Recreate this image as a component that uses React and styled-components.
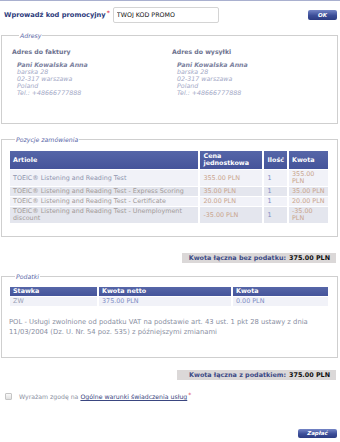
import React from "react";
import styled, { createGlobalStyle } from "styled-components";

const Global = createGlobalStyle`
  html, body { margin: 0; padding: 0; background: #fff; }
  body { font-family: "DejaVu Sans", Verdana, sans-serif; }
`;

const Page = styled.div`
  width: 340px;
  border-top: 1px solid #a9b0cf;
  box-sizing: border-box;
`;

const PromoRow = styled.div`
  display: flex;
  align-items: center;
  padding: 5px 3px 0 4px;
  height: 17px;
`;

const Label = styled.label`
  font-size: 6.7px;
  font-weight: bold;
  color: #2e3c7c;
`;

const Req = styled.sup`
  color: #e0405a;
  font-size: 6px;
  vertical-align: top;
  position: relative;
  top: -2px;
  margin-left: 1px;
`;

const Input = styled.input`
  width: 106px;
  height: 16px;
  box-sizing: border-box;
  margin-left: 3px;
  border: 1px solid #d4d4d4;
  border-radius: 2px;
  font-family: "DejaVu Sans", sans-serif;
  font-size: 6.3px;
  color: #111;
  padding: 0 3px;
  outline: none;
`;

const Spacer = styled.div`
  flex: 1;
`;

const Button = styled.button`
  width: ${(p) => p.$w}px;
  height: ${(p) => p.$h}px;
  border: none;
  border-radius: 2px;
  padding: 0;
  background: linear-gradient(#7485c6, #3c4e98 55%, #2c3c82);
  color: #fff;
  font-family: "DejaVu Sans", sans-serif;
  font-weight: bold;
  font-style: italic;
  font-size: 5.5px;
  line-height: ${(p) => p.$h}px;
  text-align: center;
`;

const Fieldset = styled.fieldset`
  margin: ${(p) => p.$mt}px 2px 0 1px;
  border: 1px solid #cfcfcf;
  padding: ${(p) => p.$pad};
  min-width: 0;
`;

const Legend = styled.legend`
  font-size: 6.2px;
  font-style: italic;
  color: #5b68a8;
  padding: 0 1px;
  margin-left: 7px;
  line-height: 7px;
`;

const AddrGrid = styled.div`
  display: grid;
  grid-template-columns: 160px 1fr;
`;

const AddrTitle = styled.div`
  font-size: 6.2px;
  font-weight: bold;
  color: #6c718e;
  margin-bottom: 6px;
`;

const AddrLines = styled.div`
  padding-left: 5px;
  font-size: 6.3px;
  font-style: italic;
  line-height: 7px;
  color: #a3a9c6;
`;

const AddrName = styled.div`
  font-weight: bold;
  color: #7a7f9e;
`;

const Table = styled.table`
  width: 100%;
  border-collapse: separate;
  border-spacing: ${(p) => p.$spacing};
  font-size: 6.4px;
`;

const Th = styled.th`
  background: linear-gradient(#5666a8, #45549a);
  color: #fff;
  font-weight: bold;
  text-align: left;
  padding: 1px 3px;
  line-height: 7px;
  height: ${(p) => p.$h || 0}px;
  width: ${(p) => p.$w || "auto"};
`;

const Td = styled.td`
  background: ${(p) => (p.$alt ? "#e4e6ee" : "#f1f2f8")};
  color: ${(p) => p.$c};
  padding: 1px 3px;
  line-height: 7px;
  vertical-align: middle;
`;

const TotalRow = styled.div`
  display: flex;
  justify-content: flex-end;
  padding: ${(p) => p.$pad};
`;

const TotalBox = styled.div`
  background: #dbd8d8;
  height: 10px;
  line-height: 10px;
  padding: 0 6px 0 ${(p) => p.$pl}px;
  font-size: 6.4px;
  font-weight: bold;
  color: #3b4a86;
`;

const TotalValue = styled.span`
  color: #111;
  margin-left: 3px;
`;

const Note = styled.div`
  font-size: 6.8px;
  line-height: 10px;
  color: #8a8fa2;
  margin-top: 10px;
  padding-left: 1px;
`;

const ConsentRow = styled.div`
  display: flex;
  align-items: center;
  padding: 13px 0 0 5px;
  font-size: 6.2px;
  color: #8b8fa0;
`;

const Box = styled.span`
  width: 5px;
  height: 5px;
  border: 1px solid #c5c5c5;
  border-radius: 1px;
  background: linear-gradient(#fafafa, #e0e0e0);
  margin-right: 7px;
`;

const Link = styled.a`
  color: #3a4680;
  text-decoration: underline;
  margin-left: 2px;
`;

const Footer = styled.div`
  display: flex;
  justify-content: flex-end;
  padding: 29px 3px 0 0;
`;

const items = [
  ["TOEIC® Listening and Reading Test", "355.00 PLN", "1", "355.00\nPLN"],
  ["TOEIC® Listening and Reading Test - Express Scoring", "35.00 PLN", "1", "35.00 PLN"],
  ["TOEIC® Listening and Reading Test - Certificate", "20.00 PLN", "1", "20.00 PLN"],
  ["TOEIC® Listening and Reading Test - Unemployment discount", "-35.00 PLN", "1", "-35.00\nPLN"],
];

const Address = ({ title }) => (
  <div>
    <AddrTitle>{title}</AddrTitle>
    <AddrLines>
      <AddrName>Pani Kowalska Anna</AddrName>
      <div>barska 28</div>
      <div>02-317 warszawa</div>
      <div>Poland</div>
      <div>Tel.: +48666777888</div>
    </AddrLines>
  </div>
);

export default function App() {
  return (
    <Page>
      <Global />
      <PromoRow>
        <Label>
          Wprowadź kod promocyjny<Req>*</Req>
        </Label>
        <Input defaultValue="TWOJ KOD PROMO" />
        <Spacer />
        <Button $w={29} $h={10}>OK</Button>
      </PromoRow>

      <Fieldset $mt={9} $pad="9px 10px 27px 10px">
        <Legend>Adresy</Legend>
        <AddrGrid>
          <Address title="Adres do faktury" />
          <Address title="Adres do wysyłki" />
        </AddrGrid>
      </Fieldset>

      <Fieldset $mt={12} $pad="7px 7px 12px 6px">
        <Legend>Pozycje zamówienia</Legend>
        <Table $spacing="2px 1px">
          <thead>
            <tr>
              <Th $h={16}>Artiole</Th>
              <Th $w="56px">Cena<br />jednostkowa</Th>
              <Th $w="14px">Ilość</Th>
              <Th $w="33px">Kwota</Th>
            </tr>
          </thead>
          <tbody>
            {items.map((r, i) => (
              <tr key={i}>
                <Td $alt={i % 2 === 1} $c={i === 0 ? "#8d93ad" : "#a29a98"}>{r[0]}</Td>
                <Td $alt={i % 2 === 1} $c="#c9a48c">{r[1]}</Td>
                <Td $alt={i % 2 === 1} $c="#7d8cc4">{r[2]}</Td>
                <Td $alt={i % 2 === 1} $c="#c9a48c" style={{ whiteSpace: "pre-line" }}>{r[3]}</Td>
              </tr>
            ))}
          </tbody>
        </Table>
      </Fieldset>

      <TotalRow $pad="16px 4px 0 0">
        <TotalBox $pl={7}>
          Kwota łączna bez podatku:<TotalValue>375.00 PLN</TotalValue>
        </TotalBox>
      </TotalRow>

      <Fieldset $mt={10} $pad="6px 7px 20px 6px">
        <Legend>Podatki</Legend>
        <Table $spacing="2px 1px">
          <thead>
            <tr>
              <Th $w="81px">Stawka</Th>
              <Th $w="126px">Kwota netto</Th>
              <Th>Kwota</Th>
            </tr>
          </thead>
          <tbody>
            <tr>
              <Td $c="#9a9fb4">ZW</Td>
              <Td $c="#7d8cc4">375.00 PLN</Td>
              <Td $c="#7d8cc4">0.00 PLN</Td>
            </tr>
          </tbody>
        </Table>
        <Note>
          POL - Usługi zwolnione od podatku VAT na podstawie art. 43 ust. 1 pkt 28 ustawy z dnia
          11/03/2004 (Dz. U. Nr. 54 poz. 535) z późniejszymi zmianami
        </Note>
      </Fieldset>

      <TotalRow $pad="12px 4px 0 0">
        <TotalBox $pl={12}>
          Kwota łączna z podatkiem:<TotalValue>375.00 PLN</TotalValue>
        </TotalBox>
      </TotalRow>

      <ConsentRow>
        <Box />
        Wyrażam zgodę na
        <Link>Ogólne warunki świadczenia usług</Link>
        <Req>*</Req>
      </ConsentRow>

      <Footer>
        <Button $w={39} $h={9}>Zapłać</Button>
      </Footer>
    </Page>
  );
}
